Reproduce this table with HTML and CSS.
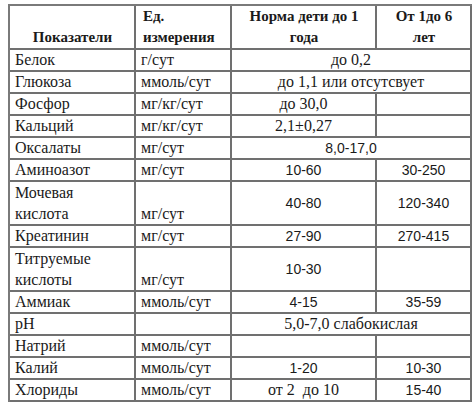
FILE: index.html
```
<!DOCTYPE html>
<html lang="ru">
<head>
<meta charset="utf-8">
<link rel="stylesheet" href="styles.css">
</head>
<body>
<table class="norms">
  <tr class="head">
    <th class="c1 bottom">Показатели</th>
    <th class="c2 left">Ед.<br>измерения</th>
    <th class="c3">Норма дети до 1<br>года</th>
    <th class="c4">От 1до 6<br>лет</th>
  </tr>
  <tr><td>Белок</td><td>г/сут</td><td colspan="2" class="ctr">до 0,2</td></tr>
  <tr><td>Глюкоза</td><td>ммоль/сут</td><td colspan="2" class="ctr">до 1,1 или отсутсвует</td></tr>
  <tr><td>Фосфор</td><td>мг/кг/сут</td><td class="ctr">до 30,0</td><td></td></tr>
  <tr><td>Кальций</td><td>мг/кг/сут</td><td class="ctr">2,1±0,27</td><td></td></tr>
  <tr><td>Оксалаты</td><td>мг/сут</td><td colspan="2" class="ctr num">8,0-17,0</td></tr>
  <tr><td>Аминоазот</td><td>мг/сут</td><td class="ctr num">10-60</td><td class="ctr num">30-250</td></tr>
  <tr class="tall"><td>Мочевая<br>кислота</td><td class="bottom">мг/сут</td><td class="ctr num">40-80</td><td class="ctr num">120-340</td></tr>
  <tr><td>Креатинин</td><td>мг/сут</td><td class="ctr num">27-90</td><td class="ctr num">270-415</td></tr>
  <tr class="tall"><td>Титруемые<br>кислоты</td><td class="bottom">мг/сут</td><td class="ctr num">10-30</td><td></td></tr>
  <tr><td>Аммиак</td><td>ммоль/сут</td><td class="ctr num">4-15</td><td class="ctr num">35-59</td></tr>
  <tr><td>pH</td><td></td><td colspan="2" class="ctr">5,0-7,0 слабокислая</td></tr>
  <tr><td>Натрий</td><td>ммоль/сут</td><td></td><td></td></tr>
  <tr><td>Калий</td><td>ммоль/сут</td><td class="ctr num">1-20</td><td class="ctr num">10-30</td></tr>
  <tr><td>Хлориды</td><td>ммоль/сут</td><td class="ctr">от 2&nbsp; до 10</td><td class="ctr num">15-40</td></tr>
</table>
</body>
</html>
```
FILE: styles.css
```
html, body {
  margin: 0;
  padding: 0;
  background: #ffffff;
}

body {
  padding: 4px 0 0 8px;
  font-family: "Liberation Serif", "Times New Roman", serif;
  font-size: 16px;
  color: #1a1a1a;
}

.norms {
  border-collapse: separate;
  border-spacing: 0;
  table-layout: fixed;
  width: 464px;
  border-left: 2px solid #7a7a7a;
  border-top: 2px solid #7a7a7a;
}

.norms th,
.norms td {
  box-sizing: border-box;
  border-right: 2px solid #707070;
  border-bottom: 2px solid #707070;
  padding: 0 4px 0 5px;
  line-height: 20px;
  height: 22px;
  text-align: left;
  vertical-align: middle;
  white-space: nowrap;
  overflow: hidden;
  font-family: "Liberation Serif", "Times New Roman", serif;
}

.norms th {
  font-weight: bold;
  font-size: 15px;
  line-height: 21px;
  height: 44px;
  text-align: center;
  vertical-align: top;
}

.norms .c1 { width: 126px; }
.norms .c2 { width: 96px; }
.norms .c3 { width: 145px; }
.norms .c4 { width: 95px; }

.norms th.left { text-align: left; padding-left: 7px; }
.norms .bottom { vertical-align: bottom; }

.norms tr.tall td {
  line-height: 21px;
  height: 44px;
}

.norms td.ctr { text-align: center; padding: 0 2px; }

.norms td.num {
  font-family: "Liberation Sans", Arial, sans-serif;
  font-size: 14px;
}
```
